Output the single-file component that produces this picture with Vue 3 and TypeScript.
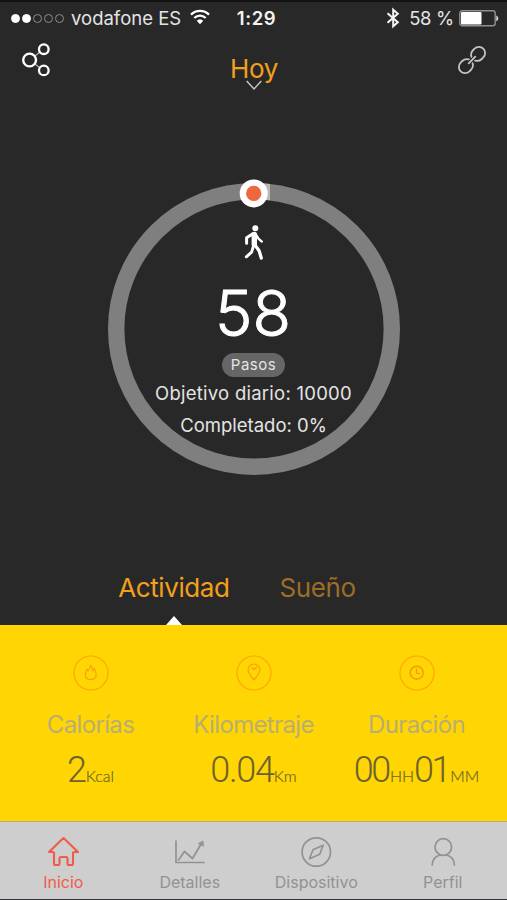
<script setup lang="ts">
import { ref } from 'vue'

interface Part { value: string; unit: string }
interface Metric { id: string; label: string; parts: Part[] }
interface NavItem { id: string; label: string }

const steps = ref(58)
const goal = ref(10000)
const activeTab = ref('actividad')
const activeNav = ref('inicio')
const signal = [true, true, false, false, false]

const tabs: NavItem[] = [
  { id: 'actividad', label: 'Actividad' },
  { id: 'sueno', label: 'Sueño' },
]

const metrics: Metric[] = [
  { id: 'calorias', label: 'Calorías', parts: [{ value: '2', unit: 'Kcal' }] },
  { id: 'kilometraje', label: 'Kilometraje', parts: [{ value: '0.04', unit: 'Km' }] },
  { id: 'duracion', label: 'Duración', parts: [{ value: '00', unit: 'HH' }, { value: '01', unit: 'MM' }] },
]

const nav: NavItem[] = [
  { id: 'inicio', label: 'Inicio' },
  { id: 'detalles', label: 'Detalles' },
  { id: 'dispositivo', label: 'Dispositivo' },
  { id: 'perfil', label: 'Perfil' },
]
</script>

<template>
  <div class="phone">
    <div class="status">
      <div class="carrier">
        <span class="dots">
          <i v-for="(on, i) in signal" :key="i" class="dot" :class="{ on }"></i>
        </span>
        <span class="operator">vodafone ES</span>
        <svg class="wifi" width="20" height="16" viewBox="0 0 20 16" fill="none" stroke="#fff" stroke-width="2.3">
          <path d="M1 5.6a12.8 12.8 0 0 1 18 0" />
          <path d="M4.3 9a8.2 8.2 0 0 1 11.4 0" />
          <path d="M10 15.2 6.7 11.8a4.8 4.8 0 0 1 6.6 0Z" fill="#fff" stroke="none" />
        </svg>
      </div>
      <div class="clock">1:29</div>
      <div class="power">
        <svg class="bt" width="14" height="22" viewBox="0 0 14 22" fill="none" stroke="#f4f4f4" stroke-width="2">
          <path d="M1.5 6.3 11.8 15.3 7.2 19.3V2.7l4.6 4L1.5 15.7" />
        </svg>
        <span class="percent">58 %</span>
        <svg class="battery" width="40" height="17" viewBox="0 0 40 17">
          <rect x="0.8" y="0.8" width="35.4" height="15" rx="2.5" fill="none" stroke="#8f8f8f" stroke-width="1.4" />
          <rect x="2" y="2" width="20.5" height="12.6" rx="1" fill="#fff" />
          <path d="M37.3 5.5c2.6.8 2.6 5 0 5.8Z" fill="#ddd" />
        </svg>
      </div>
    </div>

    <header class="header">
      <svg class="share" width="30" height="36" viewBox="0 0 30 36" fill="none" stroke="#fff">
        <path d="m14 14 5-4M14 22l5 4" stroke="#aaa" stroke-width="1.5" />
        <circle cx="8.6" cy="18" r="6.4" stroke-width="2.4" />
        <circle cx="22.8" cy="7.2" r="4.8" stroke-width="2.3" />
        <circle cx="22.8" cy="28.4" r="4.8" stroke-width="2.3" />
      </svg>
      <div class="day">
        <span class="day-name">Hoy</span>
        <svg class="chevron" width="16" height="11" viewBox="0 0 16 11" fill="none" stroke="#c8c8c8" stroke-width="1.4">
          <path d="m0.7 1 7.3 8 7.3-8" />
        </svg>
      </div>
      <svg class="link" width="30" height="30" viewBox="0 0 30 30" fill="none" stroke="#c4c4c4" stroke-width="1.8" stroke-linecap="round">
        <g transform="rotate(-45 15 15)">
          <path d="M13.2 12.4A6.7 6.7 0 0 0 7.4 8.8H5.2a6.2 6.2 0 0 0 0 12.4h2.2a6.7 6.7 0 0 0 5.8-3.6" />
          <path d="M16.8 17.6a6.7 6.7 0 0 0 5.8 3.6h2.2a6.2 6.2 0 0 0 0-12.4h-2.2a6.7 6.7 0 0 0-5.8 3.6" />
          <path d="M10.3 15h9.4" />
        </g>
      </svg>
    </header>

    <section class="hero">
      <div class="ring">
        <svg class="track" width="292" height="300" viewBox="0 0 292 300">
          <circle cx="146" cy="150" r="137.8" fill="none" stroke="#7f7f7f" stroke-width="16.4" />
          <path d="M146 4a146 146 0 0 1 16 .9v16.4a130 130 0 0 0-16-.9Z" fill="#b9b9b9" />
          <circle cx="145.7" cy="14.4" r="14" fill="#fff" />
          <circle cx="145.7" cy="14.4" r="7.7" fill="#ee683e" />
        </svg>
        <div class="summary">
          <svg class="walker" width="20" height="36" viewBox="0 0 20 36" fill="none" stroke="#fff" stroke-linecap="round" stroke-linejoin="round">
            <circle cx="11.3" cy="3.2" r="3" fill="#fff" stroke="none" />
            <path d="M10.3 9.5v10" stroke-width="5.4" />
            <path d="M8.8 8.8 2.6 12.8v5.4" stroke-width="3" />
            <path d="m12 9.5 2.7 4.3 3.2 2.8" stroke-width="2.3" />
            <path d="m10.5 19.5 4.6 6.2 2.2 7.4" stroke-width="3.3" />
            <path d="m9 22.5-1.4 4.7-5.3 4.6" stroke-width="2.9" />
          </svg>
          <div class="steps">{{ steps }}</div>
          <div class="badge">Pasos</div>
          <div class="goal">Objetivo diario: {{ goal }}</div>
          <div class="done">Completado: 0%</div>
        </div>
      </div>
    </section>

    <nav class="tabs">
      <button v-for="t in tabs" :key="t.id" class="tab" :class="[t.id, { active: t.id === activeTab }]" @click="activeTab = t.id">
        <span>{{ t.label }}</span>
      </button>
    </nav>

    <section class="panel">
      <article v-for="m in metrics" :key="m.id" class="metric">
        <svg class="metric-icon" width="36" height="36" viewBox="0 0 36 36" fill="none" stroke="#ffa305" stroke-width="1.1">
          <circle cx="18" cy="18" r="17" />
          <path v-if="m.id === 'calorias'" stroke="#fb9c08" d="M17.5 10.5c.3 2.4-.8 3.6-2.3 5.2l-1-1.4c-.3 1.7-1.9 3-1.9 5.1 0 3.2 2.3 5 5.4 5s5.500-1.800 5.500-5c0-2.400-1-4.300-2-5.800l-1.100 2.100c-.2-2.200-1-4-2.600-5.200Z" />
          <g v-else-if="m.id === 'kilometraje'" stroke="#fb9c08">
            <path d="M18 25c-2.800-4.200-6-6.800-6-10.200a6 5.800 0 0 1 12 0C24 18.200 20.800 20.800 18 25Z" />
            <path d="m15.500 12.500 2.500 2 3-2.500" />
          </g>
          <g v-else stroke="#f79c08" stroke-width="1.5">
            <circle cx="17.7" cy="17.7" r="6.5" />
            <path d="M17.5 13.5v4.6l3.7.7" stroke-width="1.2" />
          </g>
        </svg>
        <h3 class="metric-label" :class="m.id">{{ m.label }}</h3>
        <p class="metric-value" :class="m.id">
          <template v-for="p in m.parts" :key="p.unit"><span class="num">{{ p.value }}</span><span class="unit">{{ p.unit }}</span></template>
        </p>
      </article>
    </section>

    <footer class="bar">
      <button v-for="n in nav" :key="n.id" class="item" :class="{ current: n.id === activeNav }" @click="activeNav = n.id">
        <svg width="34" height="32" viewBox="0 0 34 32" fill="none" stroke="currentColor" stroke-width="1.7" stroke-linejoin="round" stroke-linecap="round">
          <path v-if="n.id === 'inicio'" stroke-width="2.1" d="M6.5 16H3L17.5 2 32 16h-3.5M8 16.5V27.5q0 1.5 1.5 1.5h2.5q1.5 0 1.5-1.5V22.5q0-1.5 1.5-1.5h5q1.5 0 1.5 1.5V27.5q0 1.5 1.5 1.5h2.5q1.5 0 1.5-1.5V16.5" />
          <g v-else-if="n.id === 'detalles'">
            <path d="M3 5v21.5h28" stroke-linejoin="miter" />
            <path d="m5.5 24 6-8.5 8 7L29 6.5" />
            <path d="m25.5 7.5 4.5-2.5.5 5Z" fill="currentColor" stroke-width=".8" />
          </g>
          <g v-else-if="n.id === 'dispositivo'">
            <circle cx="17.3" cy="16" r="14.2" />
            <path d="M24.2 9.2 20.7 18.2 10.5 22.8 14 13.8Z" />
          </g>
          <g v-else>
            <circle cx="17.3" cy="11" r="8.3" />
            <path d="M6.2 29C6.5 23.5 10 20 14 19M20.6 19C24.6 20 28.1 23.5 28.4 29" />
          </g>
        </svg>
        <span class="item-label" :class="n.id">{{ n.label }}</span>
      </button>
    </footer>
  </div>
</template>

<style>
body {
  background: #282828;
}
</style>

<style scoped>
.phone {
  box-sizing: border-box;
  display: flex;
  flex-direction: column;
  width: 507px;
  height: 900px;
  border-top: 2px solid #131313;
  border-bottom: 1px solid #333036;
  background: #282828;
  color: #e4e4e4;
  font-family: Inter, "Liberation Sans", sans-serif;
  overflow: hidden;
}
.status {
  display: grid;
  grid-template-columns: 1fr auto 1fr;
  align-items: center;
  height: 32px;
  padding: 0 8px 0 11px;
  font-size: 18.5px;
}
.carrier,
.power {
  display: flex;
  align-items: center;
}
.dots {
  display: flex;
  gap: 2px;
  margin-right: 7px;
}
.dot {
  box-sizing: border-box;
  width: 9px;
  height: 9px;
  border: 1px solid #8d8d8d;
  border-radius: 50%;
}
.dot.on {
  border-color: #fff;
  background: #fff;
}
.wifi {
  margin: 0 0 2px 9px;
}
.clock {
  padding-left: 3px;
  color: #f2f2f2;
  font-weight: 600;
  letter-spacing: 0.6px;
}
.power {
  justify-content: flex-end;
}
.bt {
  margin-right: 9px;
}
.percent {
  margin-right: 5px;
  letter-spacing: -0.3px;
}
.header {
  display: grid;
  grid-template-columns: 1fr auto 1fr;
  align-items: start;
  box-sizing: border-box;
  height: 81px;
  padding: 8px 20px 0 21px;
}
.day {
  display: flex;
  flex-direction: column;
  align-items: center;
  padding-top: 12px;
}
.day-name {
  color: #f2a01c;
  font-size: 26px;
  letter-spacing: -0.4px;
  line-height: 30px;
}
.chevron {
  margin-top: -4px;
}
.link {
  justify-self: end;
  margin-top: 3px;
}
.hero {
  display: flex;
  box-sizing: border-box;
  justify-content: center;
  padding-top: 64px;
  height: 434px;
}
.ring {
  display: grid;
  width: 292px;
  height: 300px;
}
.track,
.summary {
  grid-area: 1 / 1;
}
.summary {
  display: flex;
  flex-direction: column;
  align-items: center;
  padding-top: 46px;
  white-space: nowrap;
}
.steps {
  margin-top: 18px;
  padding-right: 1px;
  color: #fff;
  font-size: 63px;
  font-weight: 300;
  line-height: 68px;
  -webkit-text-stroke: 1px #fff;
}
.badge {
  height: 24px;
  margin: 6px 0 1px;
  padding: 0 9px;
  border-radius: 12px;
  background: #666;
  font-size: 15px;
  letter-spacing: 0.5px;
  line-height: 24px;
}
.goal,
.done {
  font-size: 18.5px;
  line-height: 31.5px;
}
.goal {
  letter-spacing: 0.25px;
}
.tabs {
  display: flex;
  justify-content: center;
  height: 76px;
  gap: 50px;
  padding-right: 33px;
}
.tab,
.item {
  padding: 0;
  border: 0;
  background: none;
  color: inherit;
  font: inherit;
}
.tab {
  display: flex;
  flex-direction: column;
  align-items: center;
  padding-top: 23px;
  color: #9c6d26;
  font-size: 26px;
  letter-spacing: -0.4px;
  line-height: 32px;
}
.tab.active {
  color: #f2a01c;
}
.tab.active::after {
  content: "";
  margin: auto 0 0 1px;
  border: 8px solid transparent;
  border-top: 0;
  border-bottom: 9px solid #fff;
}
.panel {
  display: grid;
  grid-template-columns: repeat(3, 163px);
  justify-content: center;
  box-sizing: border-box;
  flex: 1;
  padding-top: 30px;
  background: #ffd503;
}
.metric {
  display: flex;
  flex-direction: column;
  align-items: center;
  white-space: nowrap;
}
.metric-label {
  margin: 19px 0 0;
  color: #b9ae72;
  font-size: 24px;
  font-weight: 400;
  letter-spacing: -0.65px;
  line-height: 30px;
}
.metric-value {
  margin: 10px 0 0;
  color: #6b622d;
  font-family: Lato, "Liberation Sans", sans-serif;
  line-height: 40px;
}
.num {
  font-family: Roboto, "Liberation Sans", sans-serif;
  font-size: 36px;
  font-weight: 300;
  letter-spacing: -1.3px;
}
.duracion .num {
  letter-spacing: -2.4px;
}
.duracion .unit {
  padding-left: 1px;
}
.unit {
  font-size: 16px;
  font-weight: 300;
  -webkit-text-stroke: 0.2px #6b622d;
}
.bar {
  display: grid;
  grid-template-columns: repeat(4, 1fr);
  box-sizing: border-box;
  height: 78px;
  padding-right: 1px;
  border-top: 1px solid #b5ac83;
  background: #cecece;
}
.item {
  display: flex;
  flex-direction: column;
  align-items: center;
  padding-top: 14px;
  color: #929292;
}
.item-label {
  margin-top: 4px;
  font-size: 16px;
  line-height: 20px;
}
.item.current {
  color: #f05c49;
}
</style>
